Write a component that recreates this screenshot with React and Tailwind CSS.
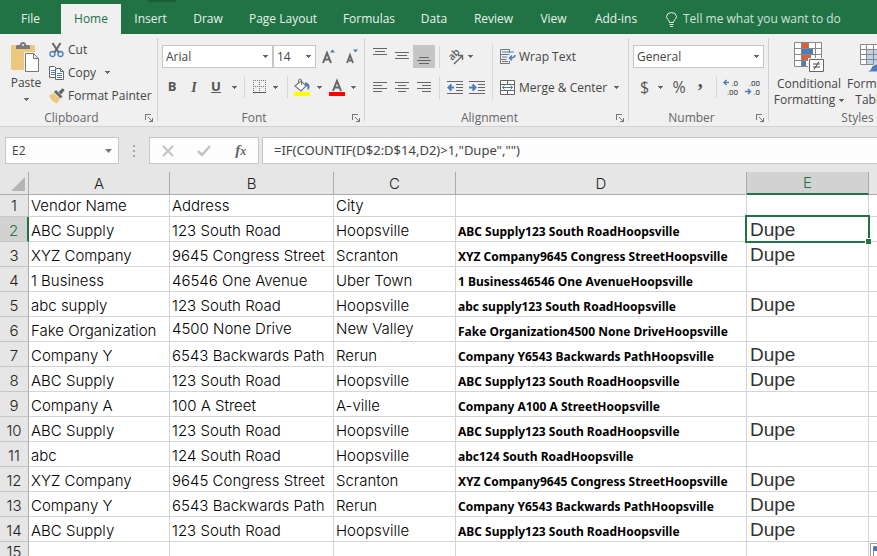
import React from 'react'
import clsx from 'clsx'

const tabs = [
  { label: 'File', width: 'w-[61px]' },
  { label: 'Home', width: 'w-[60px]' },
  { label: 'Insert', width: 'w-[59px]' },
  { label: 'Draw', width: 'w-[56px]' },
  { label: 'Page Layout', width: 'w-[94px]' },
  { label: 'Formulas', width: 'w-[78px]' },
  { label: 'Data', width: 'w-[52px]' },
  { label: 'Review', width: 'w-[67px]' },
  { label: 'View', width: 'w-[53px]' },
  { label: 'Add-ins', width: 'w-[72px]' },
]

const columns = [
  { id: 'A', width: 'w-[141px]' },
  { id: 'B', width: 'w-[164px]' },
  { id: 'C', width: 'w-[122px]' },
  { id: 'D', width: 'w-[291px]' },
  { id: 'E', width: 'w-[122px]' },
  { id: 'F', width: 'w-[122px]' },
]

const rows = [
  ['Vendor Name', 'Address', 'City', '', ''],
  ['ABC Supply', '123 South Road', 'Hoopsville', 'ABC Supply123 South RoadHoopsville', 'Dupe'],
  ['XYZ Company', '9645 Congress Street', 'Scranton', 'XYZ Company9645 Congress StreetHoopsville', 'Dupe'],
  ['1 Business', '46546 One Avenue', 'Uber Town', '1 Business46546 One AvenueHoopsville', ''],
  ['abc supply', '123 South Road', 'Hoopsville', 'abc supply123 South RoadHoopsville', 'Dupe'],
  ['Fake Organization', '4500 None Drive', 'New Valley', 'Fake Organization4500 None DriveHoopsville', ''],
  ['Company Y', '6543 Backwards Path', 'Rerun', 'Company Y6543 Backwards PathHoopsville', 'Dupe'],
  ['ABC Supply', '123 South Road', 'Hoopsville', 'ABC Supply123 South RoadHoopsville', 'Dupe'],
  ['Company A', '100 A Street', 'A-ville', 'Company A100 A StreetHoopsville', ''],
  ['ABC Supply', '123 South Road', 'Hoopsville', 'ABC Supply123 South RoadHoopsville', 'Dupe'],
  ['abc', '124 South Road', 'Hoopsville', 'abc124 South RoadHoopsville', ''],
  ['XYZ Company', '9645 Congress Street', 'Scranton', 'XYZ Company9645 Congress StreetHoopsville', 'Dupe'],
  ['Company Y', '6543 Backwards Path', 'Rerun', 'Company Y6543 Backwards PathHoopsville', 'Dupe'],
  ['ABC Supply', '123 South Road', 'Hoopsville', 'ABC Supply123 South RoadHoopsville', 'Dupe'],
  ['', '', '', '', ''],
]

const cellFonts = [
  "font-['Inter'] text-[15px] leading-5 font-light text-black",
  "font-['Inter'] text-[15px] leading-5 font-light text-black",
  "font-['Inter'] text-[15px] leading-5 font-light text-black",
  "font-['Noto_Sans'] text-[12px] leading-[18px] font-bold text-black",
  "font-['Liberation_Sans'] text-[19px] leading-[22px] text-[#333]",
]

// B6 and C6 are centred vertically, everything else sits on the bottom
const isMiddle = (row, col) => row === 5 && (col === 1 || col === 2)

function Caret() {
  return (
    <svg width="5" height="3" viewBox="0 0 5 3" className="shrink-0" shapeRendering="crispEdges">
      <path d="M0 0h5v1H0zM1 1h3v1H1zM2 2h1v1H2z" fill="#666" />
    </svg>
  )
}

function CaretButton({ label }) {
  return (
    <button type="button" aria-label={label} className="flex h-5 w-4 items-center justify-center">
      <Caret />
    </button>
  )
}

function Separator() {
  return <div className="h-[22px] w-px shrink-0 bg-[#d5d5d5]" />
}

function Group({ label, width, launcher = true, children }) {
  return (
    <section aria-label={label} className={clsx('flex shrink-0 justify-between', width)}>
      <div className="flex min-w-0 flex-1 flex-col justify-between pt-1">
        {children}
        <div className="flex items-center pr-0.5 text-[#666]">
          <span className="flex-1 text-center leading-4">{label}</span>
          {launcher && (
            <button type="button" aria-label={`${label} settings`} className="grid h-4 w-3 place-items-center">
              <svg width="8" height="8" viewBox="0 0 8 8" fill="none" stroke="#777" shapeRendering="crispEdges">
                <path d="M.5 6V.5H6M3 3l4 4M7.500 3.500v4h-4" />
              </svg>
            </button>
          )}
        </div>
      </div>
      <div className="mt-1 mb-[5px] w-px bg-[#d2d2d2]" />
    </section>
  )
}

function PasteIcon() {
  return (
    <svg width="30" height="31" viewBox="0 0 30 31">
      <rect x="0" y="3" width="24" height="25" rx="1" fill="#ecc77e" />
      <path d="M5 7V4.500q0-1.500 1.500-1.500H9q0-3 3-3t3 3h2.500Q19 3 19 4.500V7z" fill="#7a7a7a" />
      <circle cx="12" cy="3" r="1" fill="#f0f0f0" />
      <path d="M13 10h11l6 6v15H13z" fill="#f0f0f0" />
      <path d="M14.500 11.500h8l5 5v13h-13zM22.500 11.500v5h5" fill="#fff" stroke="#777" />
    </svg>
  )
}

function CutIcon() {
  return (
    <svg width="16" height="16" viewBox="0 0 16 16" fill="none">
      <path d="M3.500 1 10 11M11.500 1 5 11" stroke="#666" strokeWidth="2" />
      <circle cx="3.500" cy="12" r="2.500" stroke="#4a7ebb" strokeWidth="1.300" />
      <circle cx="11.500" cy="12" r="2.500" stroke="#4a7ebb" strokeWidth="1.300" />
    </svg>
  )
}

function CopyIcon() {
  return (
    <svg width="16" height="16" viewBox="0 0 16 16" fill="none">
      <path d="M.5 1.500h5l3 3v8h-8z" fill="#fff" stroke="#666" />
      <path d="M2 5.500h4M2 7.500h4M2 9.500h4" stroke="#4a7ebb" />
      <path d="M6.500 3.500h5l3 3v8h-8z" fill="#fff" stroke="#666" />
      <path d="M11.500 3.500v3h3" stroke="#666" />
      <path d="M8 8.500h5M8 10.500h5M8 12.500h5" stroke="#4a7ebb" />
    </svg>
  )
}

function PainterIcon() {
  return (
    <svg width="16" height="16" viewBox="0 0 16 16">
      <path d="M0 7.500 5 5l6 6-3.500 4.500q-5-2-7.500-8z" fill="#ecc77e" />
      <path d="M5 4l2-2 6.500 6.500-2 2z" fill="#666" />
      <path d="M9.500 4 13 .5q2-.5 2.500 2L12 6.500z" fill="#666" />
    </svg>
  )
}

function ClipboardGroup() {
  const items = [
    { label: 'Cut', Icon: CutIcon },
    { label: 'Copy', Icon: CopyIcon, caret: true },
    { label: 'Format Painter', Icon: PainterIcon },
  ]
  return (
    <Group label="Clipboard" width="w-[158px]">
      <div className="flex">
        <button type="button" className="flex w-12 flex-col items-center gap-0.5 pl-1 pt-1">
          <PasteIcon />
          <span className="leading-4">Paste</span>
          <span className="flex h-3 items-center">
            <Caret />
          </span>
        </button>
        <div className="flex flex-col pl-px">
          {items.map(({ label, Icon, caret }) => (
            <button key={label} type="button" className="flex h-[23px] items-center gap-[3px] whitespace-nowrap">
              <Icon />
              <span>{label}</span>
              {caret && (
                <span className="pl-1.5">
                  <Caret />
                </span>
              )}
            </button>
          ))}
        </div>
      </div>
    </Group>
  )
}

function Select({ label, value, width }) {
  return (
    <div className={clsx('relative h-[23px]', width)}>
      <select
        aria-label={label}
        defaultValue={value}
        className="h-full w-full appearance-none border border-[#c6c6c6] bg-white pl-[3px] text-[#444] outline-none"
      >
        <option>{value}</option>
      </select>
      <span className="pointer-events-none absolute inset-y-0 right-[5px] flex items-center">
        <Caret />
      </span>
    </div>
  )
}

function FontGroup() {
  return (
    <Group label="Font" width="w-[207px]">
      <div className="flex flex-col gap-2 pl-1 pt-[7px]">
        <div className="flex items-center">
          <Select label="Font name" value="Arial" width="w-[111px]" />
          <Select label="Font size" value="14" width="w-[43px]" />
          <button type="button" aria-label="Increase font size" className="ml-1.5">
            <svg width="16" height="16" viewBox="0 0 16 16" fill="none">
              <path d="M1 14 5 4l4 10M2.500 10.500h5" stroke="#666" strokeWidth="2" />
              <path d="M8 3.500h5L10.500.5z" fill="#4a7ebb" />
            </svg>
          </button>
          <button type="button" aria-label="Decrease font size" className="ml-2">
            <svg width="14" height="16" viewBox="0 0 14 16" fill="none">
              <path d="M1 14l3-8 3 8M2 11.500h4" stroke="#666" strokeWidth="1.800" />
              <path d="M7 .5h5l-2.500 3z" fill="#4a7ebb" />
            </svg>
          </button>
        </div>
        <div className="flex h-[22px] items-center text-[13px] text-[#555]">
          <button type="button" aria-label="Bold" className="w-5 font-bold">B</button>
          <button type="button" aria-label="Italic" className="w-6 font-['Liberation_Serif'] text-[14px] font-bold italic">I</button>
          <button type="button" aria-label="Underline" className="w-5 font-bold underline">U</button>
          <CaretButton label="Underline options" />
          <div className="pl-0.5">
            <Separator />
          </div>
          <button type="button" aria-label="Borders" className="ml-2">
            <svg width="14" height="14" viewBox="0 0 14 14" fill="none" stroke="#777" shapeRendering="crispEdges">
              <path d="M.5 0v13M6.500 0v13M12.500 0v13M0 .5h13M0 6.500h13" strokeDasharray="1 1" />
              <path d="M0 12.500h13" stroke="#555" />
            </svg>
          </button>
          <CaretButton label="Border options" />
          <div className="pl-1">
            <Separator />
          </div>
          <button type="button" aria-label="Fill color" className="ml-1.5">
            <svg width="17" height="18" viewBox="0 0 17 18" fill="none">
              <path d="M1 8l6-5 5 5-5 5z" fill="#fff" stroke="#777" strokeWidth="1.200" />
              <path d="M4.500 6V3q0-2 1.500-2t1.500 2v4" stroke="#777" />
              <path d="M11 4q4 1 4.500 4 .5 3-2 4 .5-4-2.500-5z" fill="#4a7ebb" />
              <path d="M0 14h16v4H0z" fill="#ff0" />
            </svg>
          </button>
          <CaretButton label="Fill color options" />
          <button type="button" aria-label="Font color" className="ml-0.5">
            <svg width="16" height="18" viewBox="0 0 16 18" fill="none">
              <path d="M4 13 8 3l4 10M5.500 9.500h5" stroke="#666" strokeWidth="2" />
              <path d="M0 14h16v4H0z" fill="#f00" />
            </svg>
          </button>
          <CaretButton label="Font color options" />
        </div>
      </div>
    </Group>
  )
}

const linePaths = {
  top: 'M0 1.500h14M2 4.500h10M0 7.500h14',
  middle: 'M0 5.500h14M2 8.500h10M0 11.500h14',
  bottom: 'M2 10.500h10M0 13.500h14M2 16.500h10',
  left: 'M0 4.500h14M0 7.500h9M0 10.500h14M0 13.500h9',
  center: 'M0 4.500h14M3 7.500h8M0 10.500h14M3 13.500h8',
  right: 'M0 4.500h14M5 7.500h9M0 10.500h14M5 13.500h9',
}

function AlignButton({ kind, active }) {
  return (
    <button
      type="button"
      aria-label={`Align ${kind}`}
      className={clsx('grid h-[23px] w-[22px] place-items-center', active && 'bg-[#c5c5c5]')}
    >
      <svg width="14" height="19" viewBox="0 0 14 19" stroke="#666" shapeRendering="crispEdges">
        <path d={linePaths[kind]} />
      </svg>
    </button>
  )
}

function IndentButton({ label, arrow }) {
  return (
    <button type="button" aria-label={label} className="grid h-[23px] w-[22px] place-items-center">
      <svg width="16" height="14" viewBox="0 0 16 14" fill="none">
        <path d="M0 .5h16M9 3.500h7M9 6.500h7M9 9.500h7M0 12.500h16" stroke="#666" shapeRendering="crispEdges" />
        <path d={arrow} stroke="#4a7ebb" strokeWidth="2" />
      </svg>
    </button>
  )
}

function AlignmentGroup() {
  return (
    <Group label="Alignment" width="w-[264px]">
      <div className="flex pl-1">
        <div className="flex flex-col gap-2 pt-[7px]">
          <div className="flex items-center">
            <AlignButton kind="top" />
            <AlignButton kind="middle" />
            <AlignButton kind="bottom" active />
            <div className="pl-1">
              <Separator />
            </div>
            <button type="button" aria-label="Orientation" className="flex items-center gap-0.5 pl-1">
              <svg width="22" height="22" viewBox="0 0 22 22" fill="none">
                <text
                  transform="translate(8 15) rotate(-45)"
                  fill="#555"
                  fontFamily="Open Sans, sans-serif"
                  fontSize="10"
                  fontWeight="600"
                >
                  ab
                </text>
                <path d="M10 18l8-8M14 9.500h4.500V14" stroke="#666" strokeWidth="1.400" />
              </svg>
              <Caret />
            </button>
          </div>
          <div className="flex items-center">
            <AlignButton kind="left" />
            <AlignButton kind="center" />
            <AlignButton kind="right" />
            <div className="pl-1">
              <Separator />
            </div>
            <div className="flex pl-1">
              <IndentButton label="Decrease indent" arrow="M1 6.500h6M4.500 3.500l-3 3 3 3" />
              <IndentButton label="Increase indent" arrow="M0 6.500h6M3.500 3.500l3 3-3 3" />
            </div>
          </div>
        </div>
        <div className="mt-1.5 ml-1 h-14 w-px bg-[#d9d9d9]" />
        <div className="flex flex-col gap-2 pl-[7px] pt-[7px]">
          <button type="button" className="flex h-[23px] items-center gap-[3px] whitespace-nowrap">
            <svg width="16" height="16" viewBox="0 0 16 16" fill="none">
              <path d="M9.500 4V.5h-9v14h9V12M.5 5.500h9M.5 10.500h6" stroke="#777" />
              <path d="M2 3h12M2 8h5" stroke="#4a7ebb" />
              <path d="M2 12.500h6" stroke="#777" />
              <path d="M15 6q0 3-5 3M12 6.500 9.500 9l2.500 2.500" stroke="#4a7ebb" strokeWidth="1.500" />
            </svg>
            Wrap Text
          </button>
          <button type="button" className="flex h-[23px] items-center gap-[3px] whitespace-nowrap">
            <svg width="16" height="16" viewBox="0 0 16 16" fill="none">
              <path d="M.5.500h14v14H.5zM.5 4.500h14M.5 10.500h14M7.500.5v4M7.500 10.500v4" fill="#fff" stroke="#666" />
              <path d="M2 7.500h11M4.500 5.500l-2 2 2 2M10.500 5.500l2 2-2 2" stroke="#4a7ebb" />
            </svg>
            Merge &amp; Center
            <span className="pl-1">
              <Caret />
            </span>
          </button>
        </div>
      </div>
    </Group>
  )
}

function DecimalIcon({ increase }) {
  return (
    <svg width="16" height="18" viewBox="0 0 16 18" fill="none">
      <g fill="#333" fontFamily="Roboto, sans-serif" fontSize="8">
        <text x="15" y="8" textAnchor="end">{increase ? '.0' : '.00'}</text>
        <text x="15" y="17" textAnchor="end">{increase ? '.00' : '.0'}</text>
      </g>
      <path
        d={increase ? 'M1 4.500h5M3.500 2 1 4.500 3.500 7' : 'M0 13.500h5M3 11l2.500 2.500L3 16'}
        stroke="#4a7ebb"
        strokeWidth="1.400"
      />
    </svg>
  )
}

function NumberGroup() {
  return (
    <Group label="Number" width="w-[140px]">
      <div className="flex flex-col gap-2 pl-1 pt-[7px]">
        <Select label="Number format" value="General" width="w-[131px]" />
        <div className="flex h-[22px] items-center text-[16px] text-[#555]">
          <button type="button" aria-label="Accounting format" className="w-[19px] pl-1">$</button>
          <CaretButton label="Accounting options" />
          <button type="button" aria-label="Percent style" className="w-[22px]">%</button>
          <button type="button" aria-label="Comma style" className="w-5 pt-2 font-['Liberation_Serif'] text-[20px] font-bold leading-4">’</button>
          <div className="pl-1.5">
            <Separator />
          </div>
          <button type="button" aria-label="Increase decimal" className="w-[22px] pl-1.5">
            <DecimalIcon increase />
          </button>
          <button type="button" aria-label="Decrease decimal" className="w-[22px] pl-1.5">
            <DecimalIcon />
          </button>
        </div>
      </div>
    </Group>
  )
}

function StylesGroup() {
  return (
    <Group label="Styles" width="w-[180px]" launcher={false}>
      <div className="flex whitespace-nowrap pl-0.5">
        <button type="button" className="flex w-[76px] flex-col items-center pt-1 leading-4">
          <svg width="31" height="31" viewBox="0 0 31 31" fill="none" className="mb-[3px]">
            <path d="M.5.500h27v24H.5z" fill="#fff" />
            <path d="M8 1h6v5H8z" fill="#d9603b" />
            <path d="M8 7h11v5H8z" fill="#4a7ebb" />
            <path d="M8 13h9v5H8z" fill="#d9603b" />
            <path d="M8 19h4v5H8z" fill="#4a7ebb" />
            <path d="M.5.500h27v24H.5zM.5 6.500h27M.5 12.500h27M.5 18.500h27M7.500.5v24M14.500.5v6M21.500.5v24" stroke="#888" />
            <path d="M14 16h17v15H14z" fill="#f0f0f0" />
            <path d="M15.500 17.500h14v12h-14z" fill="#fff" stroke="#666" />
            <path d="M19 22h7M19 25h7M25 19.500 20 27.500" stroke="#444" />
          </svg>
          <span>Conditional</span>
          <span className="flex items-center gap-1">
            Formatting <Caret />
          </span>
        </button>
        <button type="button" className="flex w-14 flex-col items-center pt-1 leading-4">
          <svg width="31" height="31" viewBox="0 0 31 31" fill="none" className="mb-[3px]">
            <path d="M.5 2.500h27v20H.5z" fill="#fff" />
            <path d="M7 8h21v14H7z" fill="#c0d2ea" />
            <path d="M.5 2.500h27v20H.5zM.5 7.500h27M.5 12.500h27M.5 17.500h27M6.500 2.500v20M13.500 2.500v20M20.500 2.500v20" stroke="#888" />
            <path d="M6 30q5-1 6-6l6-3 3 3-3 6z" fill="#4a7ebb" stroke="#f0f0f0" />
          </svg>
          <span>Format as</span>
          <span className="flex items-center gap-1">
            Table <Caret />
          </span>
        </button>
      </div>
    </Group>
  )
}

function TabBar() {
  return (
    <nav className="relative flex h-[34px] shrink-0 items-end overflow-hidden bg-[#217346] text-[#e8f2ec]">
      <span className="absolute left-[148px] top-0 h-0.5 w-7 bg-[#1b5e3a]" />
      {tabs.map((tab) => (
        <button
          key={tab.label}
          type="button"
          className={clsx(
            'h-[30px] shrink-0 whitespace-nowrap',
            tab.width,
            tab.label === 'Home' && 'bg-[#f0f0f0] text-[#217346]',
          )}
        >
          {tab.label}
        </button>
      ))}
      <button type="button" className="flex h-[30px] shrink-0 items-center gap-1.5 whitespace-nowrap pl-3.5 text-[#cfe3d8]">
        <svg width="11" height="15" viewBox="0 0 11 15" fill="none" stroke="#e3efe8">
          <path d="M3.500 10.500Q3.500 9 2 7.500 .5 6 .5 4.500q.5-4 5-4t5 4Q10.500 6 9 7.500 7.500 9 7.500 10.500zM3.500 12.500h4M4 14.500h3" />
        </svg>
        Tell me what you want to do
      </button>
    </nav>
  )
}

function FormulaBar() {
  return (
    <div className="flex h-[27px] items-stretch text-[#444]">
      <div className="ml-[5px] flex w-[114px] shrink-0 items-center border border-[#c6c6c6] bg-[#fdfdfd] pr-1.5">
        <input aria-label="Name box" defaultValue="E2" className="w-full min-w-0 bg-transparent pl-1.5 outline-none" />
        <button type="button" aria-label="Show names">
          <svg width="7" height="4" viewBox="0 0 7 4">
            <path d="M0 0h7L3.500 4z" fill="#777" />
          </svg>
        </button>
      </div>
      <div className="flex w-[30px] shrink-0 flex-col items-center justify-center gap-[3px]">
        <span className="h-0.5 w-0.5 bg-[#aaa]" />
        <span className="h-0.5 w-0.5 bg-[#aaa]" />
        <span className="h-0.5 w-0.5 bg-[#aaa]" />
      </div>
      <div className="flex w-[110px] shrink-0 items-center justify-around border border-[#c6c6c6] bg-[#fdfdfd]">
        <button type="button" aria-label="Cancel">
          <svg width="12" height="12" viewBox="0 0 12 12" stroke="#c3c3c3" strokeWidth="2">
            <path d="M1 1l10 10M11 1 1 11" />
          </svg>
        </button>
        <button type="button" aria-label="Enter">
          <svg width="14" height="12" viewBox="0 0 14 12" fill="none" stroke="#c3c3c3" strokeWidth="2.500">
            <path d="M1 6l4 4 8-9" />
          </svg>
        </button>
        <button type="button" aria-label="Insert function" className="font-['Liberation_Serif'] text-[15px] font-bold italic leading-5 text-[#666]">
          f<span className="text-[12px]">x</span>
        </button>
      </div>
      <input
        aria-label="Formula"
        defaultValue={'=IF(COUNTIF(D$2:D$14,D2)>1,"Dupe","")'}
        className="ml-[3px] min-w-0 flex-1 border-y border-l border-[#c6c6c6] bg-[#fdfdfd] pl-[11px] font-['Noto_Sans'] text-[13px] outline-none"
      />
    </div>
  )
}

function Sheet() {
  return (
    <table className="mt-2 w-[991px] table-fixed border-separate border-spacing-0 bg-white">
      <colgroup>
        <col className="w-[29px]" />
        {columns.map((column) => (
          <col key={column.id} className={column.width} />
        ))}
      </colgroup>
      <thead>
        <tr className="h-[23px] bg-[#e6e6e6] font-['Inter'] text-[15px] text-[#222]">
          <th aria-label="Select all" className="border-b border-r border-[#ababab] p-0 align-bottom">
            <svg width="14" height="14" viewBox="0 0 14 14" className="mb-[3px] ml-auto mr-[3px]">
              <path d="M14 0v14H0z" fill="#b5b5b5" />
            </svg>
          </th>
          {columns.map(({ id }) => (
            <th
              key={id}
              scope="col"
              className={clsx(
                'p-0 align-bottom font-light leading-5',
                id === 'E'
                  ? 'border-b-2 border-r border-b-[#217346] border-r-[#ababab] bg-[#d2d2d2] text-[#217346]'
                  : 'border-b border-r border-[#ababab]',
              )}
            >
              {id === 'F' ? '' : id}
            </th>
          ))}
        </tr>
      </thead>
      <tbody>
        {rows.map((row, r) => (
          <tr key={r} className={r === 0 ? 'h-[22px]' : 'h-[25px]'}>
            <th
              scope="row"
              className={clsx(
                "border-b p-0 text-center align-bottom font-['Inter'] text-[15px] font-light leading-5",
                r === 1
                  ? 'border-r-2 border-b-[#c6c6c6] border-r-[#217346] bg-[#d2d2d2] text-[#217346]'
                  : 'border-r border-b-[#c6c6c6] border-r-[#ababab] bg-[#e6e6e6] text-[#222]',
                r === 14 && 'align-top',
              )}
            >
              {r + 1}
            </th>
            {row.map((value, c) => (
              <td
                key={c}
                className={clsx(
                  'whitespace-nowrap border-b border-r border-[#d4d4d4] p-0',
                  c === 4 ? 'pl-[3px]' : 'pl-0.5',
                  isMiddle(r, c) ? 'align-middle' : 'align-bottom',
                  cellFonts[c],
                  r === 1 && c === 4 && 'relative',
                )}
              >
                {value}
                {r === 1 && c === 4 && (
                  <div className="pointer-events-none absolute -inset-0.5 border-2 border-[#217346]">
                    <span className="absolute -bottom-[3px] -right-[3px] h-1.5 w-1.5 border-l border-t border-white bg-[#217346]" />
                  </div>
                )}
              </td>
            ))}
            <td className={clsx('border-b border-r border-[#d4d4d4] p-0', r === 14 && 'relative')}>
              {r === 14 && (
                <button
                  type="button"
                  aria-label="Auto fill options"
                  className="absolute left-px top-px h-5 w-5 border border-[#999] bg-white p-0.5"
                >
                  <svg width="14" height="14" viewBox="0 0 14 14" shapeRendering="crispEdges">
                    <path d="M.5.500h12v12H.5z" fill="#fff" stroke="#888" />
                    <path d="M1 1h8v4H1z" fill="#3f6fd8" />
                  </svg>
                </button>
              )}
            </td>
          </tr>
        ))}
      </tbody>
    </table>
  )
}

export default function App() {
  return (
    <div className="flex h-screen flex-col overflow-hidden bg-[#e6e6e6] font-['Open_Sans',sans-serif] text-[12px] text-[#444]">
      <TabBar />
      <div className="flex h-[93px] shrink-0 overflow-hidden border-b border-[#d2d2d2] bg-[#f0f0f0]">
        <ClipboardGroup />
        <FontGroup />
        <AlignmentGroup />
        <NumberGroup />
        <StylesGroup />
      </div>
      <main className="min-h-0 flex-1 overflow-hidden pt-2.5">
        <FormulaBar />
        <Sheet />
      </main>
    </div>
  )
}
